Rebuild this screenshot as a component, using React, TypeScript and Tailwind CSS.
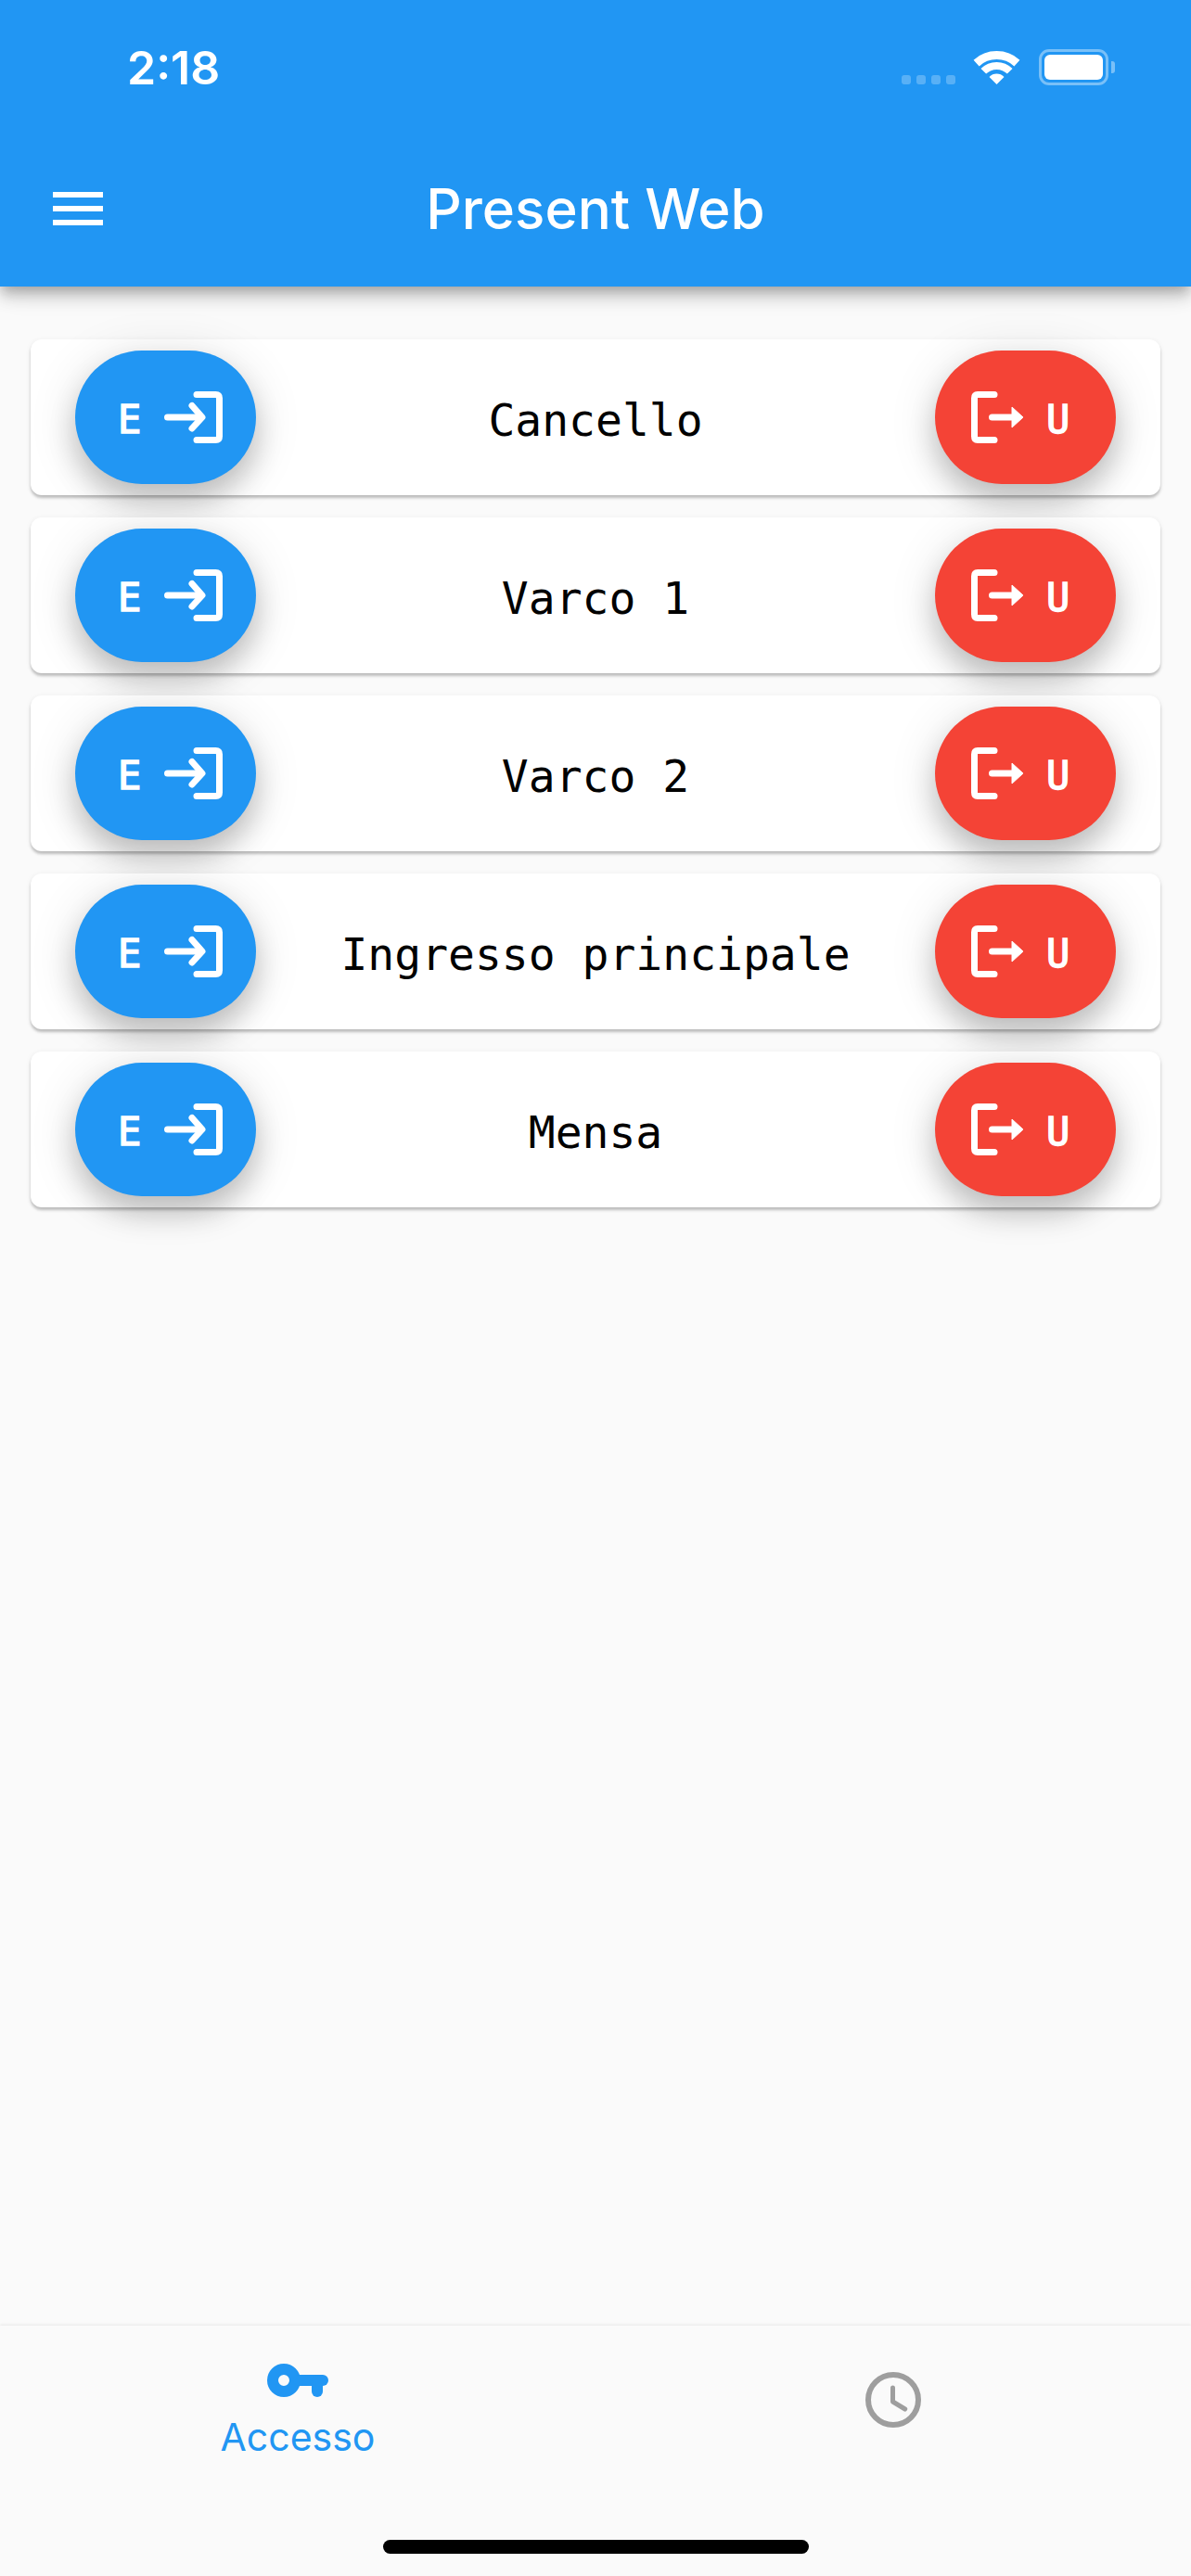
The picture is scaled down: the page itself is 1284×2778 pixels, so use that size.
const gates = ["Cancello", "Varco 1", "Varco 2", "Ingresso principale", "Mensa"];

function EnterIcon() {
  return (
    <svg width="72" height="60" viewBox="0 0 72 60" fill="none" stroke="white" strokeWidth="7" strokeLinecap="round" strokeLinejoin="round">
      <path d="M8.5 30H44" />
      <path d="M35 17.5L46 30L35 42" />
      <path d="M40 5.5H60.5Q64.5 5.5 64.5 9.5V50.5Q64.5 54.5 60.5 54.5H40" />
    </svg>
  );
}

function ExitIcon() {
  return (
    <svg width="72" height="60" viewBox="0 0 72 60" fill="none">
      <path d="M32 5.5H14Q10.5 5.5 10.5 9.5V50.5Q10.5 54.5 14 54.5H32" stroke="white" strokeWidth="7" strokeLinecap="round" />
      <path d="M29.5 30H52" stroke="white" strokeWidth="7" strokeLinecap="round" />
      <path d="M51 19L63 30L51 41Z" fill="white" stroke="white" strokeWidth="1" strokeLinejoin="round" />
    </svg>
  );
}

function KeyIcon() {
  return (
    <svg width="66" height="36" viewBox="0 0 66 36" fill="#2196f3">
      <path fillRule="evenodd" d="M18 0a18 18 0 1 0 0 36a18 18 0 0 0 0-36zM18 12a6 6 0 1 1 0 12a6 6 0 0 1 0-12z" />
      <rect x="28" y="12" width="38" height="12" rx="6" />
      <rect x="48" y="12" width="12" height="24" rx="6" />
    </svg>
  );
}

function ClockIcon() {
  return (
    <svg width="60" height="60" viewBox="0 0 60 60" fill="none" stroke="#9e9e9e" strokeLinecap="round" strokeLinejoin="round">
      <circle cx="30" cy="30" r="27" strokeWidth="6" />
      <path d="M29.5 17V32L42.7 40" strokeWidth="5" />
    </svg>
  );
}

function WifiIcon() {
  return (
    <svg width="51" height="37" viewBox="0 0 51 37" fill="none" stroke="white">
      <path d="M3.6 14.1A32.5 32.5 0 0 1 47.4 14.1" strokeWidth="9" />
      <path d="M11.3 22.8A20 20 0 0 1 39.7 22.8" strokeWidth="8" />
      <path d="M17.5 29L25.5 37L33.5 29A11 11 0 0 0 17.5 29Z" fill="white" stroke="none" />
    </svg>
  );
}

function GateRow({ name }: { name: string }) {
  return (
    <div className="flex h-[168px] items-center justify-between rounded-[12px] bg-white pl-[48px] pr-[48px] shadow-[0_3px_3px_0_rgba(0,0,0,0.22),0_1px_6px_0_rgba(0,0,0,0.06)]">
      <button type="button" className="flex h-[144px] w-[195px] items-center gap-[20px] rounded-[72px] bg-[#2196f3] pl-[46px] text-[42px] text-white shadow-[0_18px_30px_0_rgba(0,0,0,0.2),0_6px_54px_0_rgba(0,0,0,0.12)] font-['DejaVu_Sans_Mono',monospace]">
        <span className="w-[25px] pt-[5px] text-center leading-none [-webkit-text-stroke:1.5px_white]">E</span>
        <EnterIcon />
      </button>
      <span className="pt-[5px] text-[48px] leading-none text-black font-['DejaVu_Sans_Mono',monospace]">{name}</span>
      <button type="button" className="flex h-[144px] w-[195px] items-center gap-[16px] rounded-[72px] bg-[#f44336] pl-[32px] text-[42px] text-white shadow-[0_18px_30px_0_rgba(0,0,0,0.2),0_6px_54px_0_rgba(0,0,0,0.12)] font-['DejaVu_Sans_Mono',monospace]">
        <ExitIcon />
        <span className="w-[25px] pt-[5px] text-center leading-none [-webkit-text-stroke:1.5px_white]">U</span>
      </button>
    </div>
  );
}

export default function App() {
  return (
    <main className="flex h-[2778px] w-[1284px] flex-col overflow-hidden bg-[#fafafa] font-['Inter',sans-serif]">
      <header className="relative z-10 h-[309px] bg-[#2196f3] text-white shadow-[0_6px_12px_-3px_rgba(0,0,0,0.2),0_12px_15px_0_rgba(0,0,0,0.14),0_3px_30px_0_rgba(0,0,0,0.12)]">
        <div className="flex h-[150px] items-start justify-between pl-[137px] pr-[82px] pt-[53px]">
          <span className="text-[50px] font-semibold leading-[41px]">2:18</span>
          <div className="flex items-end">
            <div className="mb-[1px] mr-[19px] flex gap-[6px]">
              <span className="h-[10px] w-[10px] rounded-[3px] bg-white/25" />
              <span className="h-[10px] w-[10px] rounded-[3px] bg-white/25" />
              <span className="h-[10px] w-[10px] rounded-[3px] bg-white/25" />
              <span className="h-[10px] w-[10px] rounded-[3px] bg-white/25" />
            </div>
            <div className="mb-[1px] mr-[20px]">
              <WifiIcon />
            </div>
            <div className="flex items-center">
              <div className="h-[39px] w-[75px] rounded-[11px] border-[3px] border-white/40 p-[3px]">
                <div className="h-full w-full rounded-[6px] bg-white" />
              </div>
              <span className="ml-[3px] h-[13px] w-[4px] rounded-r-[3px] bg-white/40" />
            </div>
          </div>
        </div>
        <div className="relative flex h-[159px] items-start justify-center pt-[39px]">
          <div className="absolute left-[57px] top-[57px] flex w-[54px] flex-col gap-[9px]">
            <span className="h-[6px] bg-white" />
            <span className="h-[6px] bg-white" />
            <span className="h-[6px] bg-white" />
          </div>
          <h1 className="text-[60px] font-medium leading-[72px]">Present Web</h1>
        </div>
      </header>

      <section className="flex flex-1 flex-col gap-[24px] px-[33px] pt-[57px]">
        {gates.map((gate) => (
          <GateRow key={gate} name={gate} />
        ))}
      </section>

      <nav className="grid h-[270px] grid-cols-2 bg-[#fafafa] shadow-[0_-1px_3px_rgba(0,0,0,0.08)]">
        <div className="flex flex-col items-center pt-[41px]">
          <KeyIcon />
          <span className="mt-[18px] text-[41px] leading-[50px] text-[#2196f3]">Accesso</span>
        </div>
        <div className="flex flex-col items-center pt-[50px]">
          <ClockIcon />
        </div>
      </nav>
      <div className="absolute left-[413px] top-[2739px] h-[15px] w-[459px] rounded-full bg-black" />
    </main>
  );
}
